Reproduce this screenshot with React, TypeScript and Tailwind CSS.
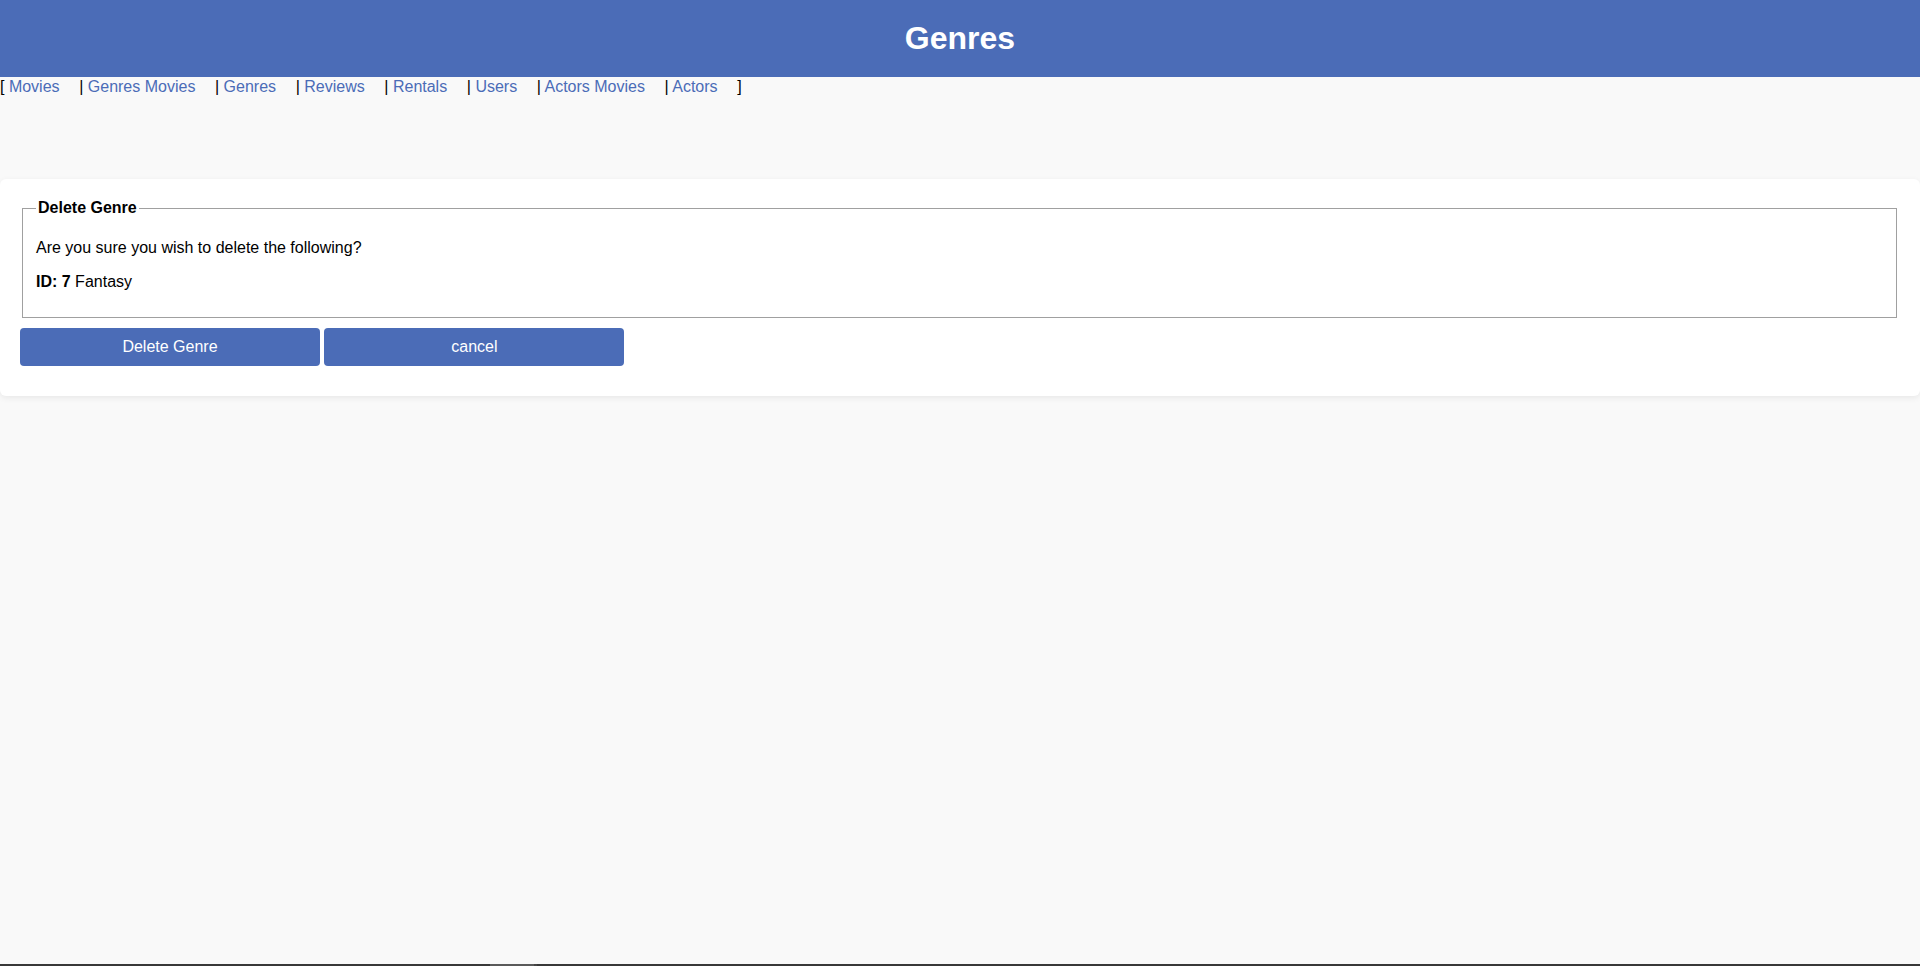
import React from "react";

const links = ["Movies", "Genres Movies", "Genres", "Reviews", "Rentals", "Users", "Actors Movies", "Actors"];

export default function App() {
  return (
    <div
      className="min-h-[966px] flex flex-col bg-[#f9f9f9] text-black text-[16px] leading-[normal]"
      style={{ fontFamily: '"Liberation Sans", Arial, sans-serif' }}
    >
      <header className="h-[77px] bg-[#4b6cb7] flex items-center justify-center">
        <h1 className="text-white text-[32px] font-bold leading-[normal]">Genres</h1>
      </header>

      <nav className="h-[18px] leading-[19px] whitespace-pre text-black">
        <span>[ </span>
        {links.map((l, i) => (
          <span key={l}>
            {i > 0 ? <span>| </span> : null}
            <a href="#" className="text-[#4b6cb7] mr-[19.6px]">{l}</a>
          </span>
        ))}
        <span>]</span>
      </nav>

      <main className="mt-[84px] bg-white rounded-[6px] shadow-[0_2px_6px_rgba(0,0,0,0.07)] p-5">
        <fieldset className="ml-[2px] mr-[3px] mb-[1px] border border-[#a0a0a0] pl-[13px] pr-3 pt-[5.6px] pb-[10px]">
          <legend className="px-[2px] font-bold">Delete Genre</legend>
          <p className="my-4">Are you sure you wish to delete the following?</p>
          <p className="my-4">
            <b>ID: 7</b> Fantasy
          </p>
        </fieldset>
        <div className="flex gap-[4.4px] mt-[10px] mb-[10px]">
          <button className="w-[300px] h-[38px] rounded-[4px] bg-[#4b6cb7] text-white text-[16px]">Delete Genre</button>
          <button className="w-[300px] h-[38px] rounded-[4px] bg-[#4b6cb7] text-white text-[16px]">cancel</button>
        </div>
      </main>

      <div className="mt-auto h-[2px] bg-[#383838] flex">
        <div className="ml-[490px] w-[44px] h-[2px] bg-[#5a5a5a]" />
        <div className="w-[3px] h-[2px] bg-[#454545]" />
      </div>
    </div>
  );
}
